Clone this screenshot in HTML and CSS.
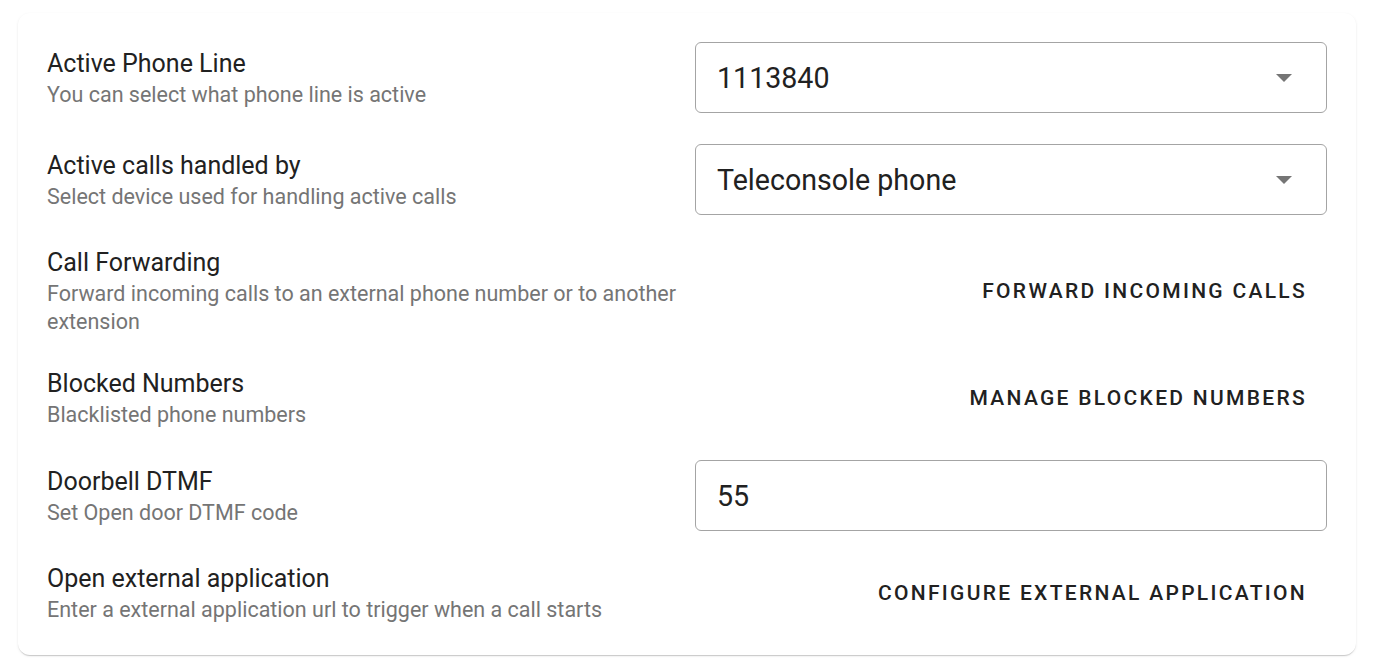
FILE: index.html
```html
<!DOCTYPE html>
<html lang="en">
<head>
    <meta charset="UTF-8">
    <meta name="viewport" content="width=device-width, initial-scale=1.0">
    <title>Phone settings</title>
    <link rel="stylesheet" href="styles.css">
</head>
<body>
    <div class="card">
        <div class="row">
            <div class="label">
                <div class="title">Active Phone Line</div>
                <div class="subtitle">You can select what phone line is active</div>
            </div>
            <div class="control">
                <div class="field select">
                    <span class="value">1113840</span>
                    <svg class="arrow" width="16" height="8" viewBox="0 0 16 8"><path d="M0 0h16L8 8z" fill="#757575"/></svg>
                </div>
            </div>
        </div>

        <div class="row">
            <div class="label">
                <div class="title">Active calls handled by</div>
                <div class="subtitle">Select device used for handling active calls</div>
            </div>
            <div class="control">
                <div class="field select">
                    <span class="value">Teleconsole phone</span>
                    <svg class="arrow" width="16" height="8" viewBox="0 0 16 8"><path d="M0 0h16L8 8z" fill="#757575"/></svg>
                </div>
            </div>
        </div>

        <div class="row">
            <div class="label">
                <div class="title">Call Forwarding</div>
                <div class="subtitle">Forward incoming calls to an external phone number or to another extension</div>
            </div>
            <div class="control action">
                <button class="text-button">Forward incoming calls</button>
            </div>
        </div>

        <div class="row">
            <div class="label">
                <div class="title">Blocked Numbers</div>
                <div class="subtitle">Blacklisted phone numbers</div>
            </div>
            <div class="control action">
                <button class="text-button">Manage blocked numbers</button>
            </div>
        </div>

        <div class="row">
            <div class="label">
                <div class="title">Doorbell DTMF</div>
                <div class="subtitle">Set Open door DTMF code</div>
            </div>
            <div class="control">
                <div class="field">
                    <span class="value">55</span>
                </div>
            </div>
        </div>

        <div class="row">
            <div class="label">
                <div class="title">Open external application</div>
                <div class="subtitle">Enter a external application url to trigger when a call starts</div>
            </div>
            <div class="control action">
                <button class="text-button">Configure external application</button>
            </div>
        </div>
    </div>
</body>
</html>
```

FILE: styles.css
```css
body {
    margin: 0;
    padding: 13px 22px 10px 18px;
    background: #fff;
    font-family: Roboto, "Noto Sans", sans-serif;
}

.card {
    background: #fff;
    border-radius: 12px;
    box-shadow: 0 2px 1px -1px rgba(0, 0, 0, 0.12), 0 1px 1px 0 rgba(0, 0, 0, 0.06), 0 1px 3px 0 rgba(0, 0, 0, 0.08);
    padding: 13.5px 29px 15.5px 29px;
}

.row {
    display: grid;
    grid-template-columns: 1fr 1fr;
    align-items: center;
    padding: 15.5px 0;
}

.title {
    font-size: 25px;
    line-height: 34px;
    color: #212121;
}

.subtitle {
    font-size: 21.5px;
    line-height: 28px;
    color: #757575;
}

.control {
    padding-left: 8px;
}

.control.action {
    display: flex;
    justify-content: flex-end;
}

.field {
    height: 71px;
    box-sizing: border-box;
    border: 1px solid #a4a4a4;
    border-radius: 6px;
    display: flex;
    align-items: center;
    padding: 0 34px 0 21px;
}

.value {
    flex: 1;
    font-size: 28.6px;
    color: #212121;
}

.arrow {
    flex: none;
}

.text-button {
    background: none;
    border: none;
    font-family: inherit;
    font-size: 21px;
    font-weight: 500;
    letter-spacing: 2.3px;
    text-transform: uppercase;
    color: #212121;
    padding: 8px 20px;
    cursor: pointer;
}
```
